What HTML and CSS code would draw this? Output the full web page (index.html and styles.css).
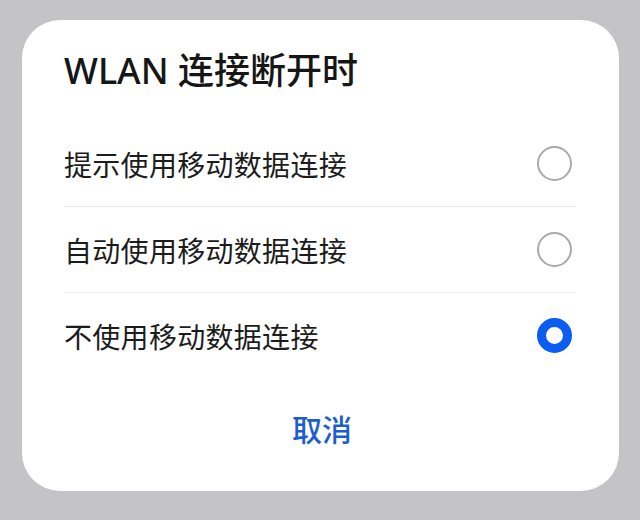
FILE: index.html
```html
<!DOCTYPE html>
<html lang="zh-CN">
<head>
<meta charset="utf-8">
<link rel="stylesheet" href="styles.css">
</head>
<body>
<div class="dialog">
  <div class="title">WLAN 连接断开时</div>
  <div class="list">
    <div class="row"><span class="label">提示使用移动数据连接</span><span class="radio"></span></div>
    <div class="row"><span class="label">自动使用移动数据连接</span><span class="radio"></span></div>
    <div class="row"><span class="label">不使用移动数据连接</span><span class="radio checked"></span></div>
  </div>
  <div class="actions"><span class="cancel">取消</span></div>
</div>
</body>
</html>
```
FILE: styles.css
```css
html, body {
  margin: 0;
  padding: 0;
  background: #c4c4c6;
}
body {
  width: 640px;
  height: 520px;
  padding-top: 20px;
  box-sizing: border-box;
  font-family: "Noto Sans", "Noto Sans CJK SC", sans-serif;
  color: #1a1a1a;
}
.dialog {
  margin-left: 22px;
  width: 597px;
  height: 471px;
  background: #ffffff;
  border-radius: 38px;
  box-sizing: border-box;
}
.title {
  padding: 29px 42px 28px;
  font-size: 36px;
  line-height: 44px;
  font-weight: 500;
  color: #161616;
}
.list {
  padding: 0 43px 0 42px;
}
.row {
  height: 85px;
  display: flex;
  align-items: center;
  justify-content: space-between;
}
.row + .row {
  border-top: 1px solid #ececec;
}
.label {
  font-family: "Noto Sans CJK SC", sans-serif;
  font-size: 28px;
  letter-spacing: 0.3px;
  color: #1c1c1c;
}
.radio {
  width: 35px;
  height: 35px;
  box-sizing: border-box;
  border: 2px solid #a9a9a9;
  border-radius: 50%;
  margin-right: 4px;
}
.radio.checked {
  border: 9px solid #0b5cf2;
}
.actions {
  display: flex;
  justify-content: center;
  margin-top: 30px;
}
.cancel {
  font-family: "Noto Sans CJK SC", sans-serif;
  font-size: 30px;
  line-height: 40px;
  font-weight: 500;
  color: #1c5fcc;
  padding-left: 3px;
}
```
